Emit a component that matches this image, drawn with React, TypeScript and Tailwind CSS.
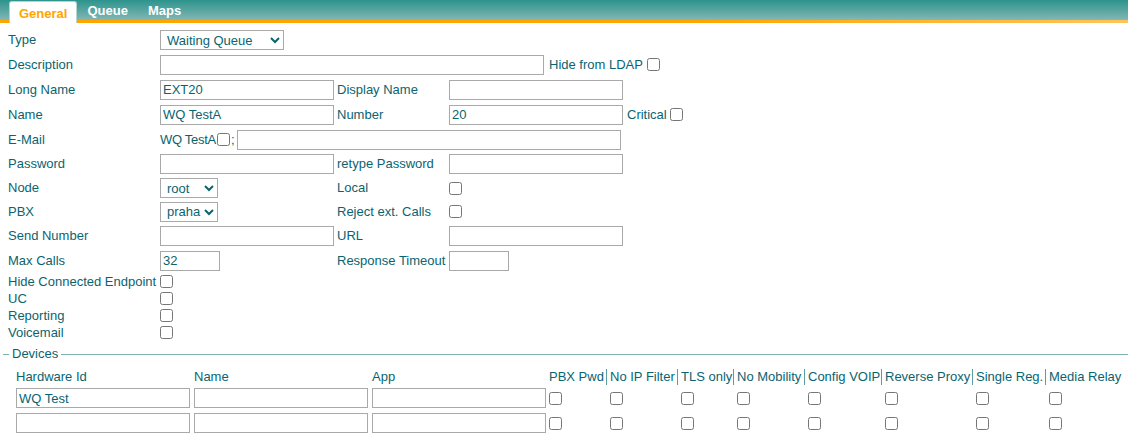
import type { ReactNode } from "react";

const TXT = "text-[#0a6470]";

function Label({ children, className = "w-[152px]" }: { children?: ReactNode; className?: string }) {
  return <div className={`${className} shrink-0 whitespace-nowrap`}>{children}</div>;
}

function Field({ className = "w-[174px]", value = "" }: { className?: string; value?: string }) {
  return (
    <input
      type="text"
      defaultValue={value}
      className={`${className} h-[20px] shrink-0 border border-[#a9a9a9] bg-white px-[2px] text-[13px] ${TXT} outline-none`}
    />
  );
}

function Check({ className = "" }: { className?: string }) {
  return <input type="checkbox" className={`m-0 h-[13px] w-[13px] shrink-0 ${className}`} />;
}

function Select({ className, options }: { className: string; options: string[] }) {
  return (
    <select className={`${className} h-[20px] shrink-0 border border-[#a9a9a9] bg-white pl-[2px] text-[13px] ${TXT}`}>
      {options.map((o) => (
        <option key={o}>{o}</option>
      ))}
    </select>
  );
}

const FLAG_COLS = [
  { label: "PBX Pwd", w: "w-[60px]", first: true },
  { label: "No IP Filter", w: "w-[71px]" },
  { label: "TLS only", w: "w-[56px]" },
  { label: "No Mobility", w: "w-[71px]" },
  { label: "Config VOIP", w: "w-[77px]" },
  { label: "Reverse Proxy", w: "w-[91px]" },
  { label: "Single Reg.", w: "w-[73px]" },
  { label: "Media Relay", w: "w-[80px]" },
];

function DeviceRow({ hw = "" }: { hw?: string }) {
  return (
    <div className="flex h-[20px] items-center pl-[14px]">
      <div className="w-[178px] shrink-0 pl-[2px]">
        <Field value={hw} />
      </div>
      <div className="w-[178px] shrink-0 pl-[2px]">
        <Field />
      </div>
      <div className="w-[176px] shrink-0 pl-[2px]">
        <Field />
      </div>
      {FLAG_COLS.map((c) => (
        <div key={c.label} className={`${c.w} shrink-0 ${c.first ? "pl-[3px]" : "pl-[4px]"} flex items-center`}>
          <Check />
        </div>
      ))}
    </div>
  );
}

export default function App() {
  return (
    <div className={`min-h-[445px] w-[1128px] bg-white font-['Liberation_Sans',Arial,sans-serif] text-[13px] ${TXT}`}>
      {/* tab strip */}
      <div className="flex h-[20px] items-start bg-[linear-gradient(to_bottom,#2d938d,#82b7b4)] pl-[9px] font-bold">
        <div className="relative z-10 mt-[1px] flex h-[22px] items-start rounded-t-[3px] border border-b-0 border-[#b9d3d1] bg-white px-[9px] pt-[2px] text-[#ffa500]">
          General
        </div>
        <div className="px-[10px] pt-[1px] text-white">Queue</div>
        <div className="px-[10px] pt-[1px] text-white">Maps</div>
      </div>
      <div className="h-[3px] bg-[linear-gradient(to_right,#ffa500_62%,#ffc458)]" />

      {/* main form */}
      <div className="pl-[8px] pt-[5px]">
        <div className="flex h-[24px] items-center">
          <Label>Type</Label>
          <Select className="w-[124px]" options={["Waiting Queue"]} />
        </div>
        <div className="flex h-[25px] items-center">
          <Label>Description</Label>
          <Field className="w-[384px]" />
          <span className="ml-[5px] whitespace-nowrap">Hide from LDAP</span>
          <Check className="ml-[4px]" />
        </div>
        <div className="flex h-[25px] items-center">
          <Label>Long Name</Label>
          <div className="w-[177px] shrink-0">
            <Field value="EXT20" />
          </div>
          <Label className="w-[112px]">Display Name</Label>
          <Field />
        </div>
        <div className="flex h-[25px] items-center">
          <Label>Name</Label>
          <div className="w-[177px] shrink-0">
            <Field value="WQ TestA" />
          </div>
          <Label className="w-[112px]">Number</Label>
          <Field value="20" />
          <span className="ml-[4px]">Critical</span>
          <Check className="ml-[3px]" />
        </div>
        <div className="flex h-[25px] items-center">
          <Label>E-Mail</Label>
          <span className="whitespace-nowrap tracking-[-0.3px]">WQ TestA</span>
          <Check className="ml-[1px]" />
          <span className="ml-[1px]">;</span>
          <Field className="ml-[2px] w-[384px]" />
        </div>
        <div className="flex h-[24px] items-center">
          <Label>Password</Label>
          <div className="w-[177px] shrink-0">
            <Field />
          </div>
          <Label className="w-[112px]">retype Password</Label>
          <Field />
        </div>
        <div className="flex h-[24px] items-center">
          <Label>Node</Label>
          <div className="w-[177px] shrink-0">
            <Select className="w-[58px]" options={["root"]} />
          </div>
          <Label className="w-[112px]">Local</Label>
          <Check />
        </div>
        <div className="flex h-[23px] items-center">
          <Label>PBX</Label>
          <div className="w-[177px] shrink-0">
            <Select className="w-[58px]" options={["praha"]} />
          </div>
          <Label className="w-[112px]">Reject ext. Calls</Label>
          <Check />
        </div>
        <div className="flex h-[25px] items-center">
          <Label>Send Number</Label>
          <div className="w-[177px] shrink-0">
            <Field />
          </div>
          <Label className="w-[112px]">URL</Label>
          <Field />
        </div>
        <div className="flex h-[25px] items-center">
          <Label>Max Calls</Label>
          <div className="w-[177px] shrink-0">
            <Field className="w-[60px]" value="32" />
          </div>
          <Label className="w-[112px]">Response Timeout</Label>
          <Field className="w-[60px]" />
        </div>
        {["Hide Connected Endpoint", "UC", "Reporting", "Voicemail"].map((l) => (
          <div key={l} className="flex h-[17px] items-center">
            <Label>{l}</Label>
            <Check />
          </div>
        ))}
      </div>

      {/* devices */}
      <div className="flex h-[26px] items-center pl-[3px]">
        <div className="h-px w-[6px] bg-[#7fb3b0]" />
        <span className="px-[3px]">Devices</span>
        <div className="h-px flex-1 bg-[#7fb3b0]" />
      </div>
      <div className="flex h-[20px] items-center whitespace-nowrap pl-[14px]">
        <div className="w-[178px] shrink-0 pl-[2px]">Hardware Id</div>
        <div className="w-[178px] shrink-0 pl-[2px]">Name</div>
        <div className="w-[176px] shrink-0 pl-[2px]">App</div>
        {FLAG_COLS.map((c) => (
          <div
            key={c.label}
            className={`${c.w} shrink-0 pl-[3px] leading-[16px] ${c.first ? "" : "border-l border-[#5a9ea3]"}`}
          >
            {c.label}
          </div>
        ))}
      </div>
      <div className="mt-[1px] flex flex-col gap-[5px]">
        <DeviceRow hw="WQ Test" />
        <DeviceRow />
      </div>
    </div>
  );
}
